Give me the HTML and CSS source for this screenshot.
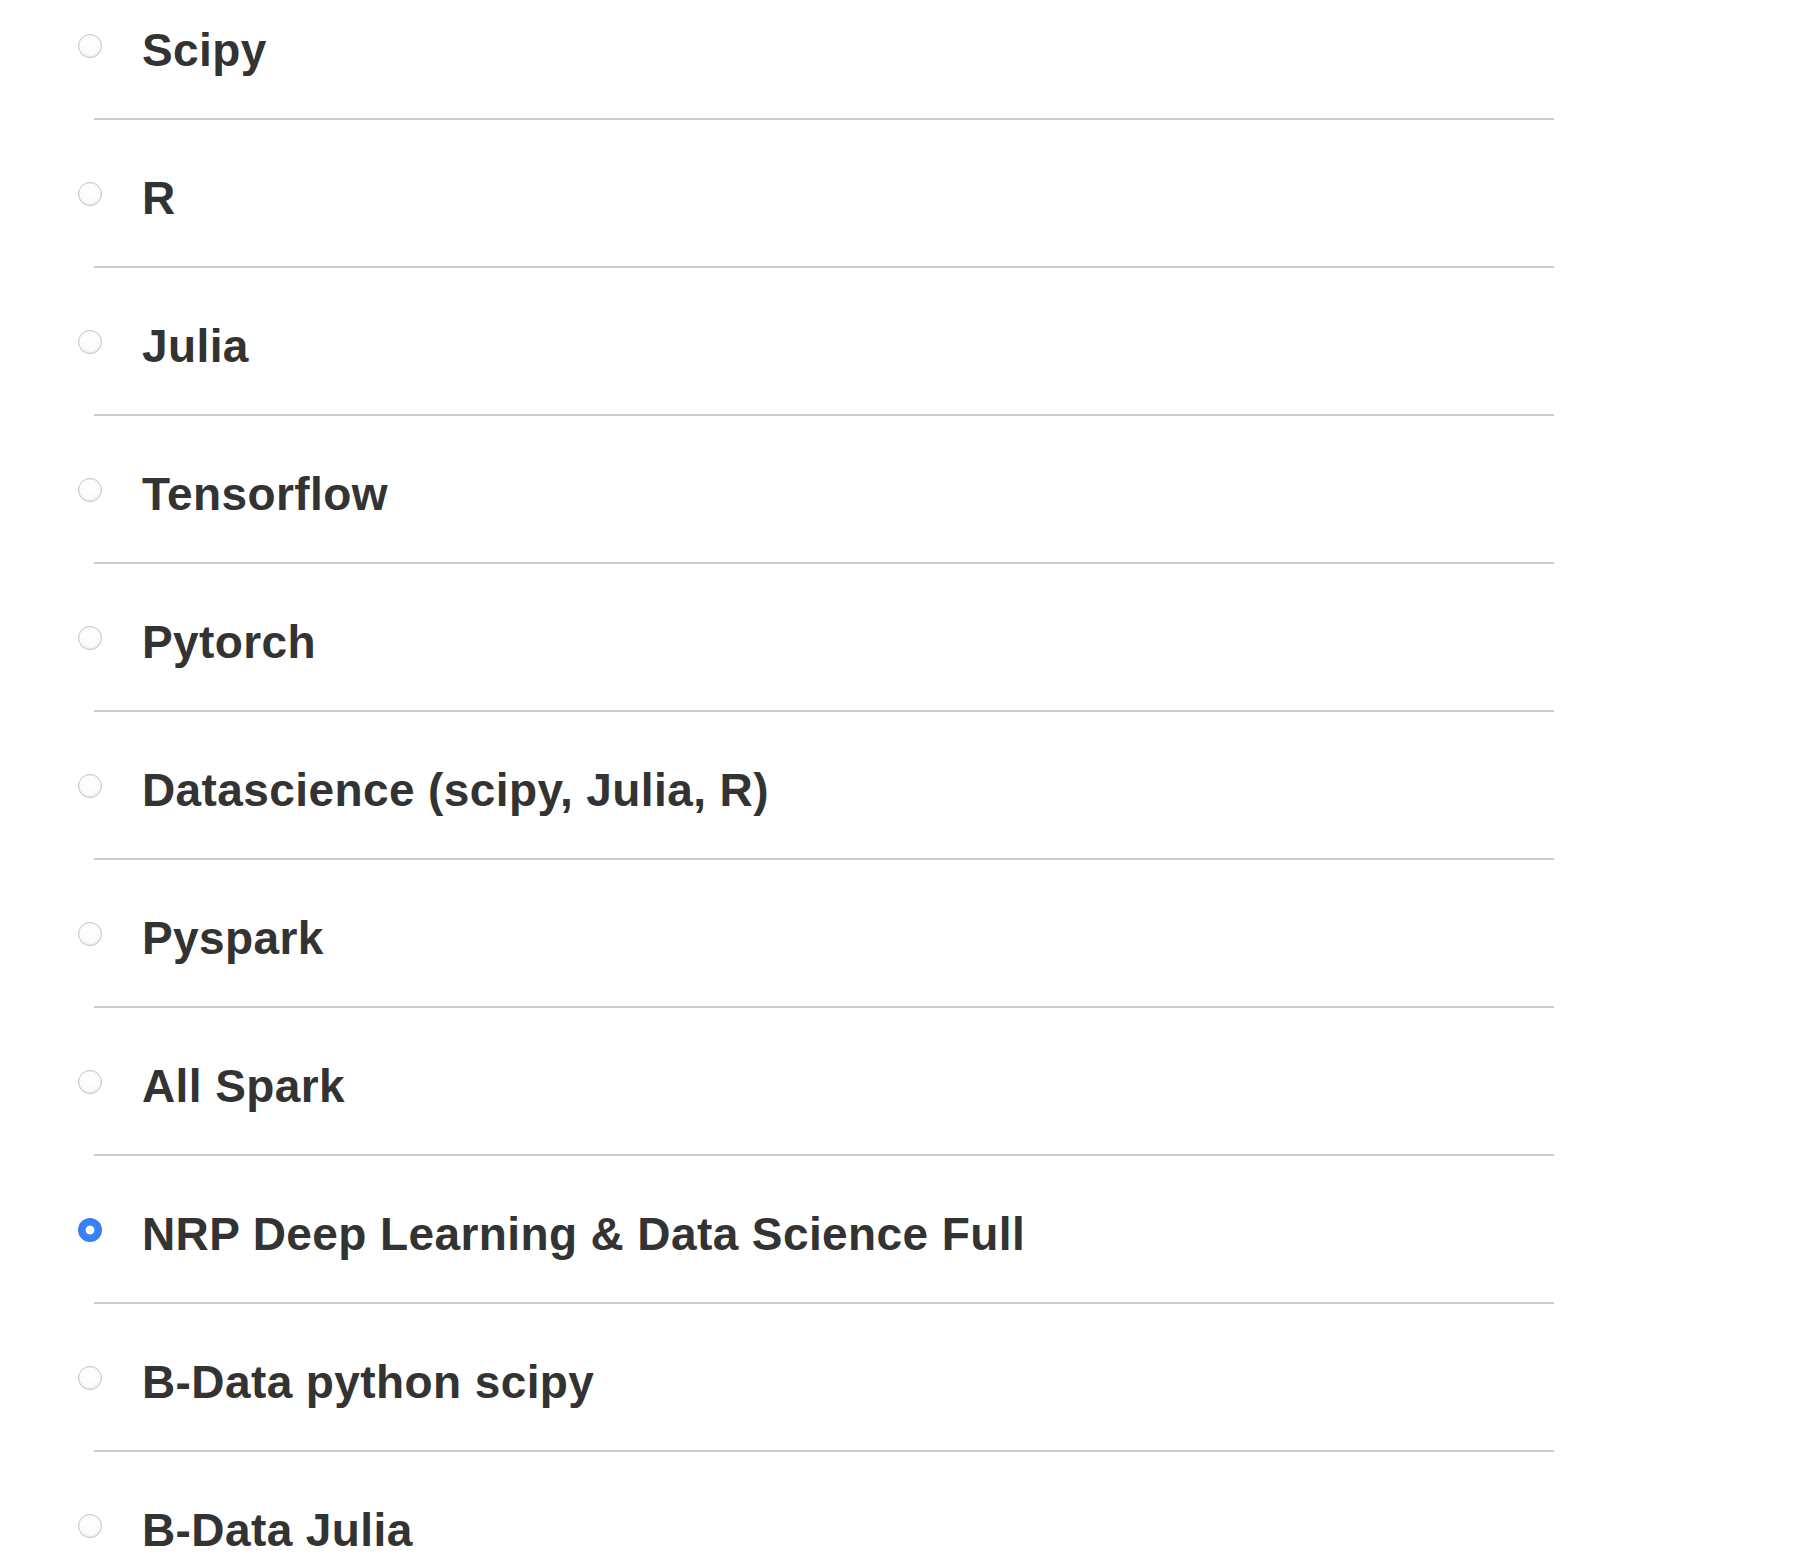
FILE: index.html
```html
<!DOCTYPE html>
<html lang="en">
<head>
<meta charset="utf-8">
<title>Image options</title>
<link rel="stylesheet" href="styles.css">
</head>
<body>
<form class="options">
  <label class="option first"><input type="radio" name="img" class="radio"><span class="name">Scipy</span></label>
  <label class="option"><input type="radio" name="img" class="radio"><span class="name">R</span></label>
  <label class="option"><input type="radio" name="img" class="radio"><span class="name">Julia</span></label>
  <label class="option"><input type="radio" name="img" class="radio"><span class="name">Tensorflow</span></label>
  <label class="option"><input type="radio" name="img" class="radio"><span class="name">Pytorch</span></label>
  <label class="option"><input type="radio" name="img" class="radio"><span class="name">Datascience (scipy, Julia, R)</span></label>
  <label class="option"><input type="radio" name="img" class="radio"><span class="name">Pyspark</span></label>
  <label class="option"><input type="radio" name="img" class="radio"><span class="name">All Spark</span></label>
  <label class="option"><input type="radio" name="img" class="radio" checked><span class="name">NRP Deep Learning &amp; Data Science Full</span></label>
  <label class="option"><input type="radio" name="img" class="radio"><span class="name">B-Data python scipy</span></label>
  <label class="option"><input type="radio" name="img" class="radio"><span class="name">B-Data Julia</span></label>
</form>
</body>
</html>
```
FILE: styles.css
```css
html, body {
  margin: 0;
  padding: 0;
  background: #ffffff;
}
body {
  font-family: "Liberation Sans", Arial, Helvetica, sans-serif;
  color: #333333;
  overflow: hidden;
  height: 1562px;
}
.options {
  margin: 0 0 0 94px;
  width: 1460px;
  display: flex;
  flex-direction: column;
}
.option {
  display: flex;
  align-items: flex-start;
  height: 146px;
  border-bottom: 2px solid #cccccc;
  cursor: pointer;
}
.option.first {
  margin-top: -28px;
}
.radio {
  appearance: none;
  -webkit-appearance: none;
  flex: none;
  width: 24px;
  height: 24px;
  margin: 62px 0 0 -16px;
  border-radius: 50%;
  border: 1px solid #c4c4c4;
  background: radial-gradient(circle at 50% 40%, #ffffff 0%, #fbfbfb 55%, #ececec 100%);
  box-shadow: inset 0 -1px 1px rgba(0,0,0,0.04);
  box-sizing: border-box;
}
.radio:checked {
  border: none;
  background: radial-gradient(circle, #ffffff 0, #ffffff 4px, #3a83f7 4.8px, #3479f6 100%);
  box-shadow: none;
}
.name {
  margin: 52px 0 0 40px;
  font-size: 46px;
  line-height: 52px;
  font-weight: bold;
  letter-spacing: 0.4px;
}
```
